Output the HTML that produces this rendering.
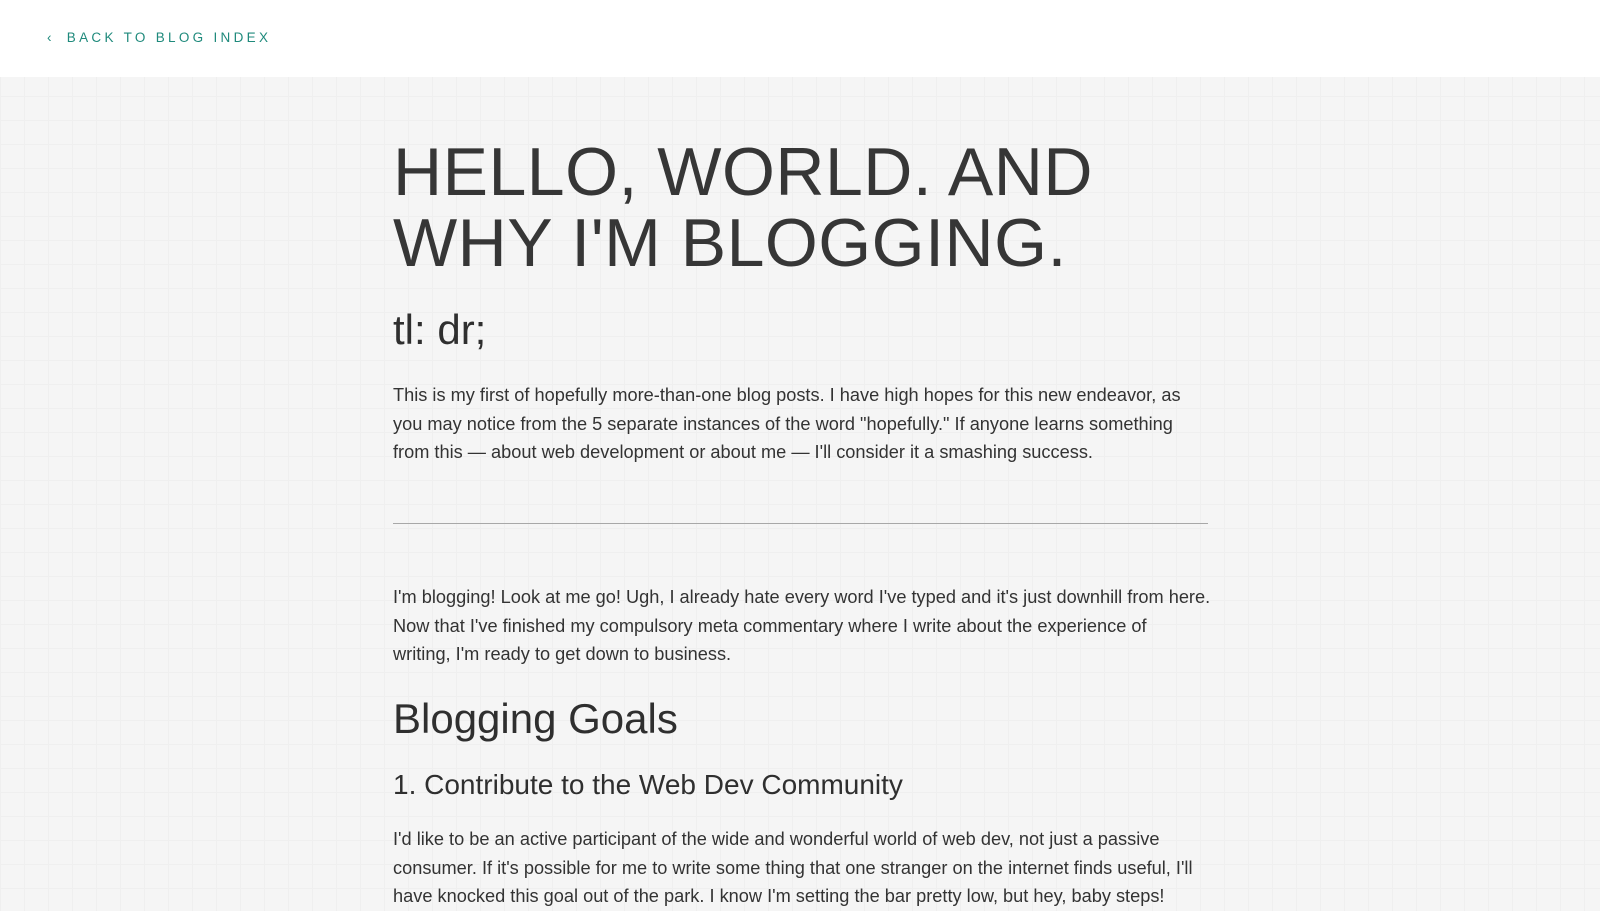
<!DOCTYPE html>
<html><head><meta charset="utf-8"><style>
html,body{margin:0;padding:0;}
body{width:1600px;height:902px;overflow:hidden;font-family:"Liberation Sans",Arial,sans-serif;color:#333;
background-color:#f5f5f5;
background-image:linear-gradient(#efefef 1px,transparent 1px),linear-gradient(90deg,#efefef 1px,transparent 1px);
background-size:24px 24px;}
header{height:77px;background:#fff;position:relative;}
.back{position:absolute;left:47px;top:30px;font-size:13.5px;letter-spacing:3.3px;color:#1f8a7c;white-space:nowrap;}
.back .c{display:inline-block;margin-right:12px;}
main{position:absolute;left:393px;top:77px;width:830px;}
h1{margin:0;position:absolute;top:60px;font-size:68px;font-weight:400;line-height:71px;letter-spacing:0.5px;color:#363636;white-space:nowrap;}
.tl{position:absolute;top:229px;font-size:42px;color:#2f2f2f;white-space:nowrap;}
p{position:absolute;margin:0;font-size:18.2px;line-height:28.6px;white-space:nowrap;color:#333;}
hr{position:absolute;top:446px;left:0;width:815px;margin:0;border:0;border-top:1.5px solid #a8a8a8;}
.h2{position:absolute;top:618px;font-size:42px;white-space:nowrap;color:#2f2f2f;}
.h3{position:absolute;top:692px;font-size:28px;white-space:nowrap;color:#2f2f2f;}
</style></head><body>
<header><div class="back"><span class="c">‹</span>BACK TO BLOG INDEX</div></header>
<main>
<h1>HELLO, WORLD. AND<br>WHY I'M BLOGGING.</h1>
<div class="tl">tl: dr;</div>
<p style="top:304px">This is my first of hopefully more-than-one blog posts. I have high hopes for this new endeavor, as<br>you may notice from the 5 separate instances of the word "hopefully." If anyone learns something<br>from this — about web development or about me — I'll consider it a smashing success.</p>
<hr>
<p style="top:506px">I'm blogging! Look at me go! Ugh, I already hate every word I've typed and it's just downhill from here.<br>Now that I've finished my compulsory meta commentary where I write about the experience of<br>writing, I'm ready to get down to business.</p>
<div class="h2">Blogging Goals</div>
<div class="h3">1. Contribute to the Web Dev Community</div>
<p style="top:748px">I'd like to be an active participant of the wide and wonderful world of web dev, not just a passive<br>consumer. If it's possible for me to write some thing that one stranger on the internet finds useful, I'll<br>have knocked this goal out of the park. I know I'm setting the bar pretty low, but hey, baby steps!</p>
</main>
</body></html>
